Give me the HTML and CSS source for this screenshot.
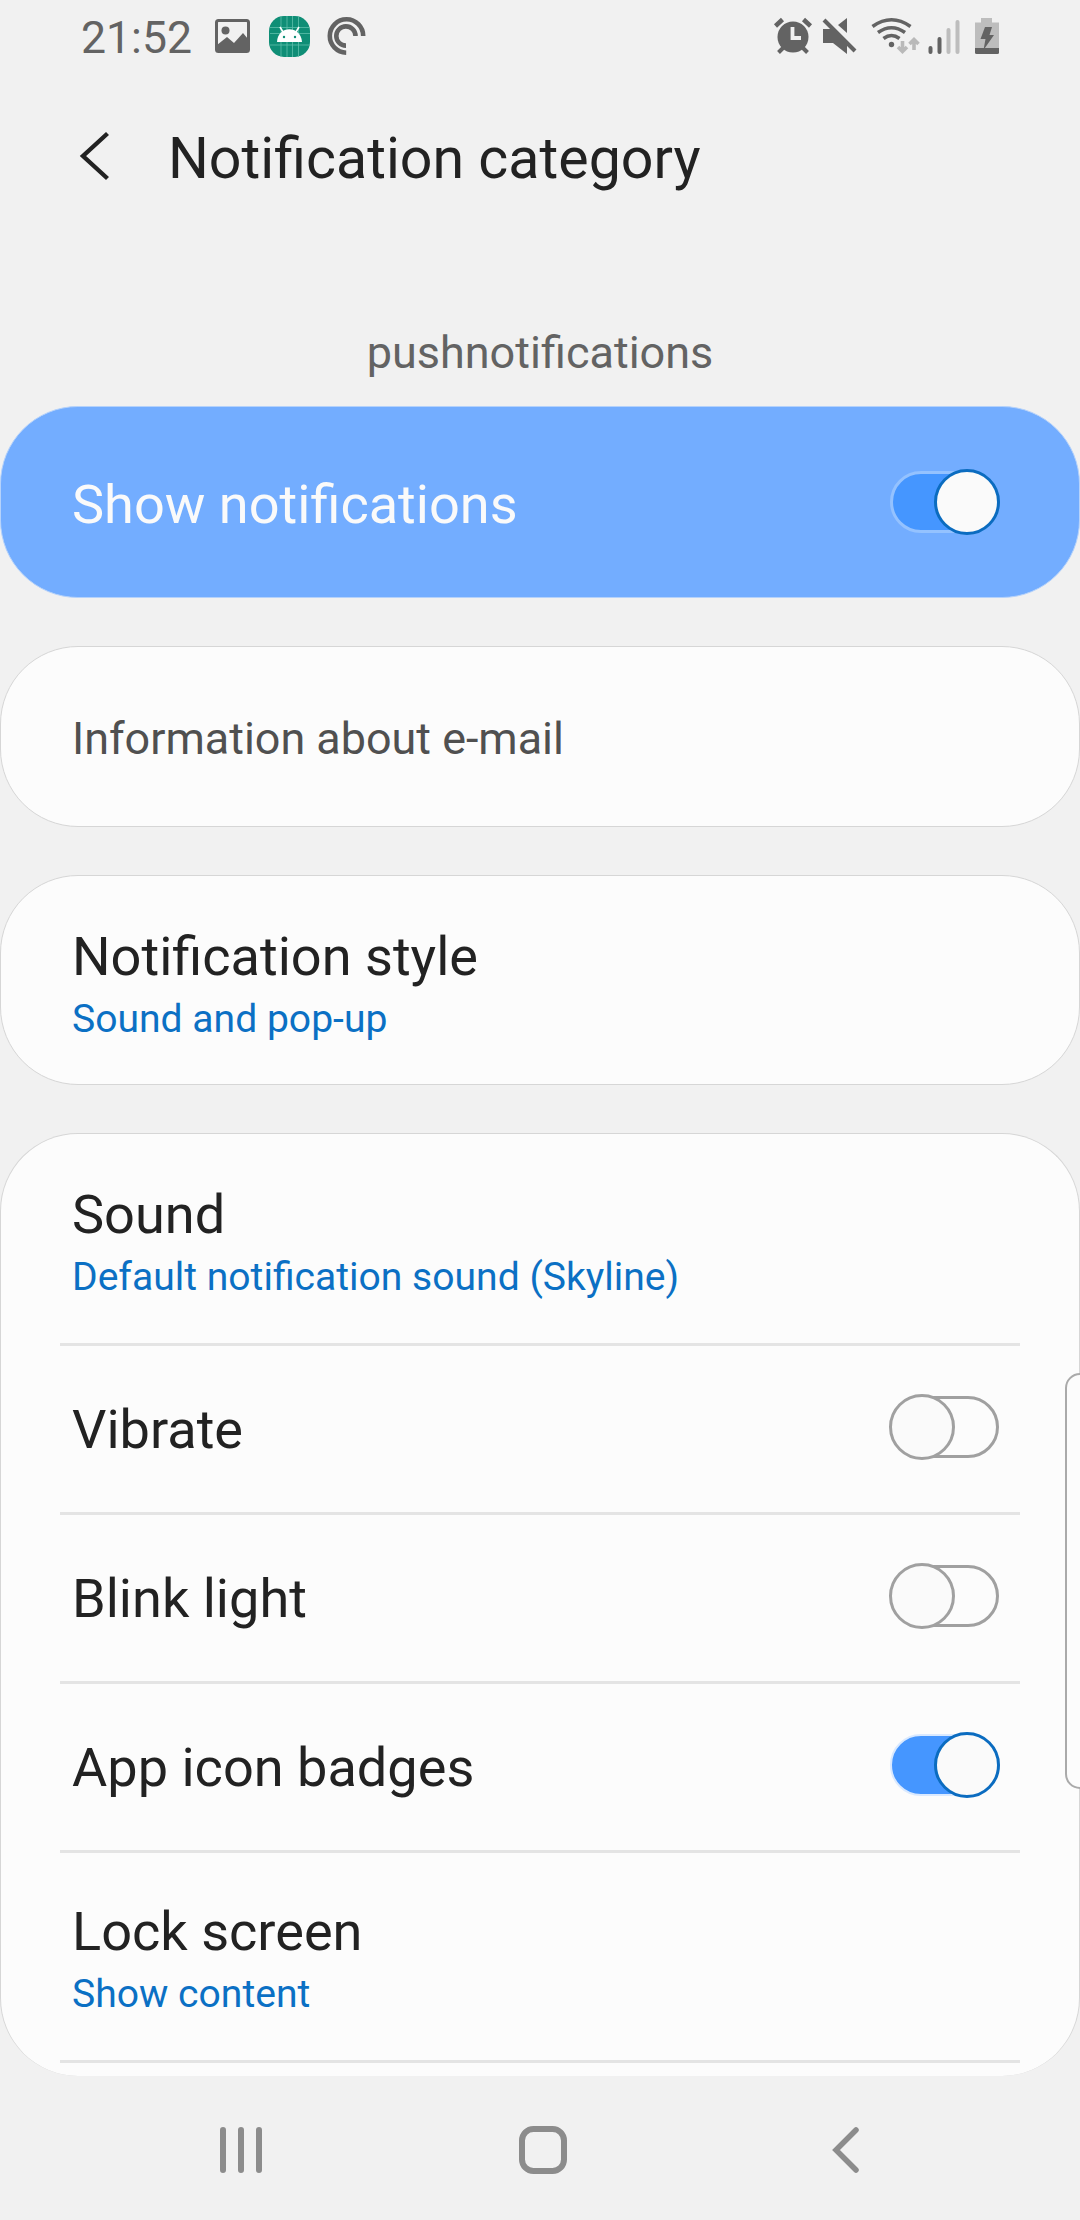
FILE: index.html
```html
<!DOCTYPE html>
<html lang="en">
<head>
<meta charset="utf-8">
<title>Notification category</title>
<link rel="stylesheet" href="styles.css">
</head>
<body>
<div class="screen">
  <div class="status">
    <span class="clock">21:52</span>
    <svg class="status-left" width="160" height="44" viewBox="210 14 160 44">
      <rect x="216.500" y="20.500" width="32" height="31" rx="2" fill="none" stroke="#636363" stroke-width="3"/>
      <circle cx="225.500" cy="30.500" r="4" fill="#636363"/>
      <path d="M217 45l10-8 7 6 9-10 5 6v12h-31z" fill="#636363"/>
      <rect x="269" y="16" width="41" height="41" rx="15" fill="#0f8e76"/>
      <path d="M281 16v41M287 16v41M292.500 16v41M298.500 16v41M270 27.500h40M270 33.500h40M270 45h40" stroke="#5dbfab" stroke-width=".8"/>
      <path d="M277 42c.5-17 24-17 25 0z" fill="#fff"/>
      <path d="M283 32l-3-5M296 32l3-5" stroke="#fff" stroke-width="1.600"/>
      <circle cx="284" cy="37" r="1.200" fill="#0f8e76"/><circle cx="295" cy="37" r="1.200" fill="#0f8e76"/>
      <path d="M363.200 36a16.700 16.700 0 1 0-17 16.700M355.500 36a9.600 9.600 0 1 0-9.500 9.600" fill="none" stroke="#636363" stroke-width="4.600"/>
    </svg>
    <svg class="status-right" width="230" height="44" viewBox="770 14 230 44">
      <g fill="#636363" stroke="#636363">
        <circle cx="793" cy="37" r="15.500" stroke="none"/>
        <path d="M775.500 26l7-6.500M803.500 19.500l7 6.500" stroke-width="4.500"/>
        <path d="M783 48l-4.500 4.500M803 48l4.500 4.500" stroke-width="4"/>
        <path d="M792.500 27v11h8.500" fill="none" stroke="#f1f1f1" stroke-width="3.800"/>
      </g>
      <path d="M838 25l9-7v15z" fill="#636363"/>
      <path d="M823 29h9l15 14v11l-14-11h-10z" fill="#636363"/>
      <path d="M827 18l30 30" stroke="#f1f1f1" stroke-width="3"/>
      <path d="M824 20l31 31" stroke="#636363" stroke-width="4"/>
      <g fill="none" stroke="#636363" stroke-width="3.600">
        <path d="M872.500 26.500q19-13.500 38 0M878 32.500q13.500-9.500 27 0M883.500 38.500q8-6 16 0"/>
        <circle cx="891.500" cy="44.500" r="2.700" fill="#636363" stroke="none"/>
      </g>
      <path d="M902.500 41v10M898 47l4.500 4.500 4.500-4.500M914 50v-10M909.500 44l4.500-4.500 4.500 4.500" fill="none" stroke="#b9b9b9" stroke-width="3.600"/>
      <path d="M930.500 48v4M939.500 39v13" stroke="#636363" stroke-width="4" stroke-linecap="round"/>
      <path d="M948.500 30v22M957.500 22v30" stroke="#bdbdbd" stroke-width="4" stroke-linecap="round"/>
      <path d="M981 18h11v4.500h7V48h-24V22.500h6z" fill="#bdbdbd"/>
      <path d="M975 48h24v4.500q0 1.500-1.500 1.500h-21q-1.500 0-1.500-1.500z" fill="#636363"/>
      <path d="M985 27h7l-2.500 8h4.500l-10.500 15 2-11h-5z" fill="#636363"/>
    </svg>
  </div>

  <header class="header">
    <svg width="34" height="52" viewBox="0 0 34 52"><path d="M30.500 3.500L6 26l24.500 22.500" fill="none" stroke="#222" stroke-width="4.400"/></svg>
    <h1 class="title">Notification category</h1>
  </header>
  <div class="category">pushnotifications</div>

  <main class="cards">
    <section class="card card-main">
      <span class="label">Show notifications</span>
      <span class="switch on"></span>
    </section>
    <section class="card card-info">Information about e-mail</section>
    <section class="card card-style">
      <div class="label">Notification style</div>
      <div class="value">Sound and pop-up</div>
    </section>
    <section class="card card-list">
      <div class="row tall first">
        <div class="label">Sound</div>
        <div class="value">Default notification sound (Skyline)</div>
      </div>
      <div class="row"><span class="label">Vibrate</span><span class="switch"></span></div>
      <div class="row"><span class="label">Blink light</span><span class="switch"></span></div>
      <div class="row"><span class="label">App icon badges</span><span class="switch on"></span></div>
      <div class="row tall">
        <div class="label">Lock screen</div>
        <div class="value">Show content</div>
      </div>
    </section>
  </main>
  <div class="edge-handle"></div>

  <nav class="nav">
    <svg width="42" height="46" viewBox="0 0 42 46"><path d="M3 3v40M21 3v40M39 3v40" stroke="#8c8c8c" stroke-width="6" stroke-linecap="round"/></svg>
    <svg class="home" width="48" height="48" viewBox="0 0 48 48"><rect x="3" y="3" width="42" height="42" rx="11.500" fill="none" stroke="#8c8c8c" stroke-width="6"/></svg>
    <svg width="28" height="46" viewBox="0 0 28 46"><path d="M24 3L4 23l20 20" fill="none" stroke="#8c8c8c" stroke-width="5.500" stroke-linecap="round"/></svg>
  </nav>
</div>
</body>
</html>
```
FILE: styles.css
```css
*, *::before, *::after { box-sizing: border-box; }
body {
  margin: 0;
  background: #f1f1f1;
  color: #222;
  font-family: Roboto, sans-serif;
}
svg { display: block; flex: none; }
.screen {
  position: relative;
  width: 1080px;
  height: 2220px;
  overflow: hidden;
  display: flex;
  flex-direction: column;
}
.status {
  height: 80px;
  padding: 14px 80px 0 81px;
  display: flex;
  align-items: flex-start;
}
.clock {
  width: 129px;
  font-size: 44.6px;
  line-height: 48px;
  color: #636363;
  white-space: nowrap;
}
.status-right { margin-left: auto; }
.header {
  height: 157px;
  padding-left: 77px;
  display: flex;
  align-items: center;
  gap: 57px;
}
.header svg { margin-bottom: 5px; }
.title {
  margin: 0;
  font-size: 57.3px;
  font-weight: 400;
  line-height: 80px;
}
.category {
  margin-top: 62px;
  height: 107px;
  line-height: 107px;
  text-align: center;
  font-size: 45px;
  color: #636363;
}
.cards {
  display: flex;
  flex-direction: column;
  gap: 48px;
}
.card {
  border: 1px solid #d6d6d6;
  border-radius: 78px;
  background: #fcfcfc;
}
.card-main {
  height: 192px;
  padding: 0 80px 0 71px;
  display: flex;
  align-items: center;
  justify-content: space-between;
  background: #73adff;
  border-color: #b5d2fb;
  color: #fafafa;
}
.card-main .label { padding-top: 6px; }
.card-info {
  height: 181px;
  padding-left: 71px;
  line-height: 183px;
  font-size: 44.9px;
  color: #505050;
}
.card-style { height: 210px; padding: 49px 71px 0; }
.label { font-size: 54.1px; line-height: 64px; }
.value {
  margin-top: 4px;
  font-size: 39.1px;
  line-height: 52px;
  color: #0b70c4;
}
.card-list {
  height: 943px;
  border-bottom: 0;
}
.row {
  height: 169px;
  margin: 0 59px;
  padding: 0 21px 0 12px;
  border-bottom: 3px solid #e4e4e4;
  display: flex;
  align-items: center;
  justify-content: space-between;
}
.row > .label { padding-top: 2px; }
.row.tall { display: block; height: 210px; padding-top: 45px; }
.row.first { height: 212px; padding-top: 47px; }
.switch {
  flex: none;
  position: relative;
  width: 109px;
  height: 62px;
  border: 3px solid #a0a0a0;
  border-radius: 31px;
}
.switch::after {
  content: "";
  position: absolute;
  left: -4px;
  top: -5px;
  width: 66px;
  height: 66px;
  border: 3px solid #a0a0a0;
  border-radius: 50%;
  background: #fafafa;
}
.switch.on {
  background: #4596ff;
  border-color: #94c2ff;
}
.switch.on::after {
  left: auto;
  right: -4px;
  border-color: #0b6cc0;
}
.row .switch { margin-bottom: 4px; }
.row .switch.on {
  border-color: #d9e9ff;
  border-width: 2px;
}
.row .switch.on::after { top: -4px; right: -3px; }
.edge-handle {
  position: absolute;
  left: 1065px;
  top: 1373px;
  width: 30px;
  height: 416px;
  border: 2px solid #aaa;
  border-radius: 18px;
  background: #fcfcfc;
}
.nav {
  height: 144px;
  padding: 4px 220px 0;
  display: flex;
  align-items: center;
  justify-content: space-between;
}
.home { margin-right: 8px; }
```
